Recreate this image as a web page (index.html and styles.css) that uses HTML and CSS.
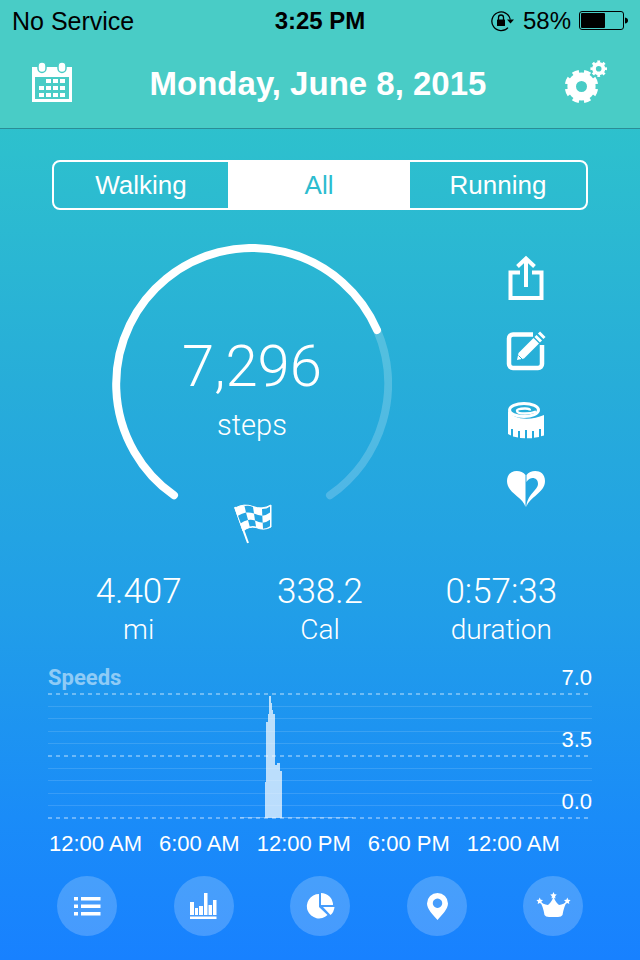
FILE: index.html
```html
<!DOCTYPE html>
<html lang="en">
<head>
<meta charset="utf-8">
<meta name="viewport" content="width=device-width, initial-scale=1">
<title>Daily steps</title>
<link rel="stylesheet" href="styles.css">
</head>
<body>
<div class="app">
  <div class="top">
    <div class="status">
      <span class="carrier">No Service</span>
      <span class="clock">3:25 PM</span>
      <span class="battery">
        <svg width="24" height="22" viewBox="0 0 24 22" aria-hidden="true">
          <path d="M17 17.600A9.300 9.300 0 1 1 19.300 9.500" fill="none" stroke="#000" stroke-width="1.300"/>
          <path d="M16 9.500h7l-3.500 4z"/>
          <rect x="6" y="9.500" width="8" height="6.500" rx=".6"/>
          <path d="M7.500 10V7.500a2.500 2.500 0 0 1 5 0V10" fill="none" stroke="#000" stroke-width="1.300"/>
        </svg>
        <span class="percent">58%</span>
        <svg width="49" height="20" viewBox="0 0 49 20" aria-hidden="true">
          <rect x=".5" y=".5" width="44" height="18" rx="2.500" fill="none" stroke="#000"/>
          <rect x="2" y="2" width="24" height="15" rx="1"/>
          <path d="M46 6.500q3 .5 3 3t-3 3z"/>
        </svg>
      </span>
    </div>
    <header class="bar">
      <button class="icon-button" type="button" aria-label="Calendar">
        <svg width="40" height="42" viewBox="0 0 40 42" fill="#fff" aria-hidden="true">
          <path fill-rule="evenodd" d="M0 6h40v35H0zM3 16v22h34V16z"/>
          <rect x="6" y="1" width="8" height="10.500" rx="4" stroke="#49ccc6" stroke-width="1.500"/>
          <rect x="26" y="1" width="8" height="10.500" rx="4" stroke="#49ccc6" stroke-width="1.500"/>
          <path d="M14 18h5v4h-5zM21 18h5v4h-5zM28 18h5v4h-5zM7 25h5v4H7zM14 25h5v4h-5zM21 25h5v4h-5zM28 25h5v4h-5zM7 32h5v4H7zM14 32h5v4h-5zM21 32h5v4h-5zM28 32h5v4h-5z"/>
        </svg>
      </button>
      <h1>Monday, June 8, 2015</h1>
      <button class="icon-button" type="button" aria-label="Settings">
        <svg width="44" height="44" viewBox="0 0 44 44" fill="none" stroke="#fff" aria-hidden="true">
          <circle cx="17.500" cy="26.500" r="9.800" stroke-width="8.600"/>
          <circle cx="17.500" cy="26.500" r="14.800" stroke-width="4" pathLength="80" stroke-dasharray="5.600 4.400" stroke-dashoffset="-2.200"/>
          <circle cx="34.700" cy="8.700" r="4.700" stroke-width="3.800"/>
          <circle cx="34.700" cy="8.700" r="7" stroke-width="2.600" pathLength="80" stroke-dasharray="5 5" stroke-dashoffset="2.500"/>
        </svg>
      </button>
    </header>
  </div>

  <main>
    <div class="segments" role="group" aria-label="Activity">
      <button type="button">Walking</button>
      <button type="button" class="selected" aria-pressed="true">All</button>
      <button type="button">Running</button>
    </div>

    <section class="progress">
      <div class="gauge">
        <svg class="ring" viewBox="0 0 280 280" fill="none" stroke="#fff" stroke-width="8" stroke-linecap="round" aria-hidden="true">
          <path d="M265 86A136 136 0 0 1 218 251.300" stroke-opacity=".2"/>
          <path d="M62 251.300A136 136 0 1 1 265 86"/>
        </svg>
        <div class="reading">
          <strong>7,296</strong>
          <span>steps</span>
        </div>
        <svg class="flag" width="38" height="42" viewBox="0 0 38 42" aria-hidden="true">
          <path d="M1 4L14 40" stroke="#fff" stroke-width="2" fill="none"/>
          <path d="M1 5Q10 0 19 3.500T37 2V24Q30 28 22 24.500Q15 23 9 28Z" fill="#fff" stroke="#fff"/>
          <g fill="#24a4e2">
            <path d="M10.500 3Q15 2 19 4l1 6.500q-4-1.500-8-1z"/>
            <path d="M28 6q5 0 8-2.500v6q-4 3-7.700 3.300z"/>
            <path d="M4 12.700q4-2.500 8-3.200l2 7.500q-4 .8-7.200 3.300z"/>
            <path d="M20 10.500q4 2 8.300 2.300l.4 6.900q-4-.2-7.700-2.200z"/>
            <path d="M14 17q4-.5 7 .5l1 6q-3-.8-6.300 0z"/>
            <path d="M28.700 19.700q4-.5 7.300-3v6.500q-3 2.300-7 2.500z"/>
          </g>
        </svg>
      </div>
      <div class="actions">
        <button class="icon-button" type="button" aria-label="Share">
          <svg width="40" height="46" viewBox="0 0 40 46" fill="none" stroke="#fff" aria-hidden="true">
            <path d="M14 17.500H4.500V43H35.500V17.500H26" stroke-width="4"/>
            <path d="M20 32V4M11.500 11.500L20 3.500l8.500 8" stroke-width="4"/>
          </svg>
        </button>
        <button class="icon-button" type="button" aria-label="Edit">
          <svg width="40" height="42" viewBox="0 0 40 42" fill="none" aria-hidden="true">
            <path d="M27 4.500H7a4 4 0 0 0-4 4V34a4 4 0 0 0 4 4H32a4 4 0 0 0 4-4V15" stroke="#fff" stroke-width="4.500"/>
            <path d="M11 30l1.500-7L27.500 8l5.500 5.500L18 28.500z" fill="#fff"/>
            <path d="M12.500 25.500l3.500 3.500" stroke="#28b1d7" stroke-width="1"/>
            <path d="M29.500 6l5.500 5.500M33 2.500l5.500 5.500" stroke="#fff" stroke-width="3"/>
          </svg>
        </button>
        <button class="icon-button" type="button" aria-label="Measurements">
          <svg width="40" height="40" viewBox="0 0 40 40" aria-hidden="true">
            <path d="M2 9C6 19 25 20 38 14V34.500l-3 .8V28h-2v8l-5 .8V30h-2v7.200h-5V29h-2v8.200l-5-.2V30h-2v6.600l-5-1.200V28H5v6.500L2 33z" fill="#fff"/>
            <ellipse cx="18" cy="9" rx="14.500" ry="6.500" fill="#27aed9" stroke="#fff" stroke-width="3"/>
            <path d="M24 9.500q0-2-5-2-8 0-8 2.300 0 2.700 8 2.700 6 0 11-2" stroke="#fff" stroke-width="2.400" fill="none"/>
          </svg>
        </button>
        <button class="icon-button" type="button" aria-label="Health">
          <svg width="40" height="38" viewBox="0 0 40 38" fill="#fff" aria-hidden="true">
            <path d="M19.500 37C17 27 1 23 1 11C1-1 15-1 19.500 5z"/>
            <path d="M20.500 37C23 27 39 23 39 11C39-1 25-1 20.500 5V12C24 6 32 7 32 14C32 20 20.500 25 20.500 37z"/>
          </svg>
        </button>
      </div>
    </section>

    <dl class="stats">
      <div><dd>4.407</dd><dt>mi</dt></div>
      <div><dd>338.2</dd><dt>Cal</dt></div>
      <div><dd>0:57:33</dd><dt>duration</dt></div>
    </dl>

    <section class="chart">
      <h2>Speeds</h2>
      <svg class="plot" viewBox="0 0 544 126" fill="none" aria-hidden="true">
        <path d="M0 13.500H544M0 25.500H544M0 38.500H544M0 50.500H544M0 75.500H544M0 87.500H544M0 100.500H544M0 112.500H544" stroke="#fff" stroke-opacity=".13"/>
        <path d="M0 1H541M0 63H541M0 125H541" stroke="#fff" stroke-opacity=".36" stroke-width="2" stroke-dasharray="4 4"/>
        <path d="M192 124.500H217M234 124.500H305" stroke="#fff" stroke-opacity=".3"/>
        <path d="M217 125V89H218V29H220V21H221V3H223V10H224V17H225V21H227V72H229V70H232V78H234V125z" fill="#fff" fill-opacity=".7"/>
      </svg>
      <div class="scale"><span>7.0</span><span>3.5</span><span>0.0</span></div>
      <div class="hours"><span>12:00 AM</span><span>6:00 AM</span><span>12:00 PM</span><span>6:00 PM</span><span>12:00 AM</span></div>
    </section>
  </main>

  <nav class="tabs" aria-label="Views">
    <button type="button" aria-label="List">
      <svg width="32" height="32" viewBox="0 0 32 32" fill="#fff" aria-hidden="true">
        <path d="M3 7h4v3.500H3zM10 7h19.500v3.500H10zM3 14.500h4V18H3zM10 14.500h19.500V18H10zM3 22h4v3.500H3zM10 22h19.500v3.500H10z"/>
      </svg>
    </button>
    <button type="button" aria-label="Statistics">
      <svg width="32" height="32" viewBox="0 0 32 32" fill="#fff" aria-hidden="true">
        <path d="M2 12h4v13H2zM7 18h3v7H7zM11 16h4v9h-4zM16 3h3.500v22H16zM20.500 15H24v10h-3.500zM25 10h3.500v15H25zM2 26.500h26.500V29H2z"/>
      </svg>
    </button>
    <button type="button" aria-label="Breakdown">
      <svg width="32" height="32" viewBox="0 0 32 32" fill="#fff" aria-hidden="true">
        <path d="M15 4A12.200 12.200 0 1 0 23.500 25L15 17z"/>
        <path d="M17 3A12 12 0 0 1 29 15H17z"/>
        <path d="M19 17H30.500Q30 22 26.500 25z"/>
      </svg>
    </button>
    <button type="button" aria-label="Places">
      <svg width="32" height="32" viewBox="0 0 32 32" fill="#fff" aria-hidden="true">
        <path fill-rule="evenodd" d="M16.500 3A10.500 10.500 0 0 1 27 13.500C27 19 21 25 16.500 30C12 25 6 19 6 13.500A10.500 10.500 0 0 1 16.500 3zM16.500 8.500a4.700 4.700 0 1 0 .01 0z"/>
      </svg>
    </button>
    <button type="button" aria-label="Achievements">
      <svg class="crown" width="32" height="32" viewBox="0 0 32 32" fill="#fff" aria-hidden="true">
        <path d="M2.500 10.500Q6 14.500 11 15Q15 12 16.500 6Q18 12 22 15Q27 14.500 30.500 10.500Q27 16 25.500 25Q24.500 27 21 27H12Q8.500 27 7.500 25Q6 16 2.500 10.500z"/>
        <path id="star" d="M16.500 2l1 2.200 2.300.3-1.700 1.700.4 2.300-2-1.100-2 1.100.4-2.300-1.700-1.700 2.300-.3z"/>
        <use href="#star" x="-13.800" y="5.500"/>
        <use href="#star" x="13.800" y="5.500"/>
      </svg>
    </button>
  </nav>
</div>
</body>
</html>
```
FILE: styles.css
```css
* {
  box-sizing: border-box;
}

body {
  margin: 0;
  color: #fff;
  font-family: "Liberation Sans", Arial, sans-serif;
}

button {
  margin: 0;
  padding: 0;
  border: 0;
  background: none;
  color: inherit;
  font: inherit;
  cursor: pointer;
}

svg {
  display: block;
}

h1,
h2,
dl,
dd {
  margin: 0;
}

.app {
  display: flex;
  flex-direction: column;
  min-height: 100vh;
  background: linear-gradient(#30c8c6 0%, #2dbfce 16%, #27add9 40%, #219ee8 64%, #1a8cf8 85%, #1881ff 100%);
}

.top {
  background: #49ccc6;
  border-bottom: 1px solid #2b8d96;
}

.status {
  display: grid;
  grid-template-columns: 1fr auto 1fr;
  align-items: center;
  height: 40px;
  padding: 2px 12px 0;
  color: #000;
  font-size: 24px;
}

.carrier {
  font-size: 25px;
}

.clock {
  font-weight: bold;
}

.battery {
  display: flex;
  justify-content: flex-end;
  align-items: center;
  gap: 8px;
}

.bar {
  display: flex;
  justify-content: space-between;
  align-items: center;
  height: 88px;
  padding: 0 32px;
}

.bar .icon-button {
  padding-bottom: 4px;
}

h1 {
  font-size: 33px;
  line-height: 42px;
}

.segments {
  display: grid;
  grid-template-columns: 87fr 91fr 88fr;
  height: 50px;
  margin: 31px 52px 0;
  border: 2px solid #fff;
  border-radius: 8px;
  font-size: 26px;
}

.segments .selected {
  background: #fff;
  color: #2dbccf;
}

.progress {
  display: flex;
  justify-content: space-between;
  padding: 34px 94px 0 112px;
}

.gauge {
  position: relative;
  width: 280px;
  height: 300px;
}

.ring {
  width: 100%;
}

.reading {
  position: absolute;
  inset: 90px 0 auto;
  display: flex;
  flex-direction: column;
  align-items: center;
  gap: 11px;
  font-family: Roboto, "Liberation Sans", sans-serif;
  font-weight: 300;
}

.reading strong {
  font-size: 58px;
  line-height: 64px;
  font-weight: 300;
}

.reading span {
  font-size: 29px;
  line-height: 32px;
}

.flag {
  position: absolute;
  top: 259px;
  left: 122px;
}

.actions {
  display: flex;
  flex-direction: column;
  gap: 29px;
  padding-top: 11px;
}

.stats {
  display: grid;
  grid-template-columns: repeat(3, 1fr);
  padding: 28px 48px 0;
  font-family: Roboto, "Liberation Sans", sans-serif;
  font-weight: 300;
  text-align: center;
}

.stats div {
  display: flex;
  flex-direction: column;
}

.stats dd {
  font-size: 35px;
  line-height: 40px;
}

.stats dt {
  font-size: 28px;
  line-height: 36px;
}

.chart {
  position: relative;
  margin: 15px 48px 0;
}

h2 {
  color: rgba(255, 255, 255, 0.5);
  font-family: Roboto, "Liberation Sans", sans-serif;
  font-size: 22px;
  line-height: 30px;
}

.plot {
  width: 100%;
}

.scale {
  position: absolute;
  top: 2px;
  right: 0;
  display: flex;
  flex-direction: column;
  gap: 36px;
  font-size: 22px;
  line-height: 26px;
}

.hours {
  display: flex;
  gap: 17px;
  padding: 12px 1px 0;
  font-size: 22px;
  line-height: 26px;
  white-space: nowrap;
}

.tabs {
  display: flex;
  justify-content: space-between;
  padding: 19px 57px 24px;
}

.tabs button {
  display: grid;
  place-items: center;
  width: 60px;
  height: 60px;
  border-radius: 50%;
  background: rgba(255, 255, 255, 0.2);
}

.crown {
  overflow: visible;
}
```
